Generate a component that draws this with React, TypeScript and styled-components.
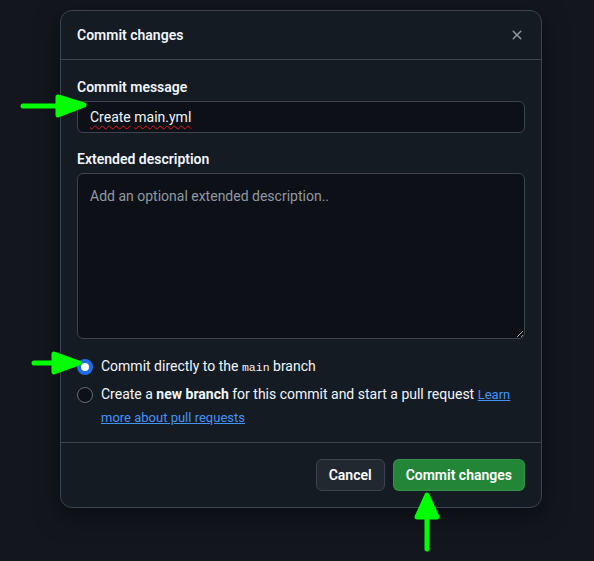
import React from "react";
import styled, { createGlobalStyle } from "styled-components";

const Global = createGlobalStyle`
  html, body { margin: 0; padding: 0; background: #13171d; }
  body {
    font-family: Roboto, "Noto Sans", "Liberation Sans", sans-serif;
    color: #f0f6fc;
    font-size: 14px;
  }
  * { box-sizing: border-box; }
`;

const Page = styled.div`
  position: relative;
  width: 594px;
  height: 561px;
  padding: 10px 0 0 60px;
`;

const Dialog = styled.div`
  width: 482px;
  background: #151b23;
  border: 1px solid #3d444d;
  border-radius: 12px;
  box-shadow: 0 8px 24px rgba(1, 4, 9, 0.5);
  display: flex;
  flex-direction: column;
`;

const Header = styled.div`
  display: flex;
  align-items: center;
  padding: 8px 8px 8px 16px;
  border-bottom: 1px solid #3d444d;
`;

const Title = styled.h1`
  flex: 1;
  margin: 0;
  font-size: 14px;
  font-weight: 600;
  line-height: 20px;
`;

const CloseButton = styled.button`
  width: 32px;
  height: 32px;
  display: flex;
  align-items: center;
  justify-content: center;
  background: transparent;
  border: none;
  border-radius: 6px;
  color: #9198a1;
  padding: 0;
  cursor: pointer;
`;

const Body = styled.div`
  padding: 17px 16px 13px;
  display: flex;
  flex-direction: column;
`;

const Field = styled.div`
  display: flex;
  flex-direction: column;
  gap: 4px;
  margin-bottom: 16px;
`;

const Label = styled.label`
  font-size: 14px;
  font-weight: 600;
  line-height: 20px;
`;

const FakeInput = styled.div`
  height: 32px;
  padding: 5px 12px;
  background: #0d1117;
  border: 1px solid #3d444d;
  border-radius: 6px;
  font-size: 14px;
  line-height: 20px;
  white-space: pre;
`;

const Misspelled = styled.span`
  text-decoration: underline wavy #e5161b;
  text-decoration-thickness: 1px;
  text-underline-offset: 3px;
`;

const TextArea = styled.textarea`
  height: 166px;
  padding: 12px 12px;
  background: #0d1117;
  border: 1px solid #3d444d;
  border-radius: 6px;
  color: #f0f6fc;
  font-family: inherit;
  font-size: 14px;
  line-height: 20px;
  resize: vertical;
  outline: none;
  &::placeholder { color: #9198a1; }
`;

const RadioGroup = styled.div`
  display: flex;
  flex-direction: column;
  gap: 5px;
`;

const RadioRow = styled.label`
  display: flex;
  align-items: flex-start;
  gap: 8px;
  line-height: 23px;
  font-size: 14px;
`;

const Radio = styled.input.attrs({ type: "radio" })`
  appearance: none;
  margin: 3.5px 0 0;
  flex: none;
  width: 16px;
  height: 16px;
  border-radius: 50%;
  background: #0d1117;
  border: 1px solid #656c76;
  &:checked {
    background: #ffffff;
    border: 4.5px solid #1f6feb;
  }
`;

const RadioText = styled.span`
  flex: 1;
`;

const Code = styled.code`
  font-family: "Liberation Mono", "DejaVu Sans Mono", monospace;
  font-size: 11.5px;
  line-height: 1;
`;

const Link = styled.a`
  color: #4493f8;
  text-decoration: underline;
  font-size: 13px;
  line-height: 1;
`;

const Footer = styled.div`
  display: flex;
  justify-content: flex-end;
  gap: 8px;
  padding: 16px;
  border-top: 1px solid #3d444d;
`;

const Button = styled.button<{ $primary?: boolean }>`
  height: 32px;
  padding: 0 12px;
  border-radius: 6px;
  font-family: inherit;
  font-size: 14px;
  font-weight: 600;
  color: #ffffff;
  background: ${(p) => (p.$primary ? "#238636" : "#212830")};
  border: 1px solid ${(p) => (p.$primary ? "rgba(240,246,252,0.1)" : "#3d444d")};
  cursor: pointer;
`;

const Annotations = styled.svg`
  position: absolute;
  left: 0;
  top: 0;
  pointer-events: none;
`;

export default function App() {
  return (
    <>
      <Global />
      <Page>
        <Dialog>
          <Header>
            <Title>Commit changes</Title>
            <CloseButton aria-label="Close">
              <svg width="16" height="16" viewBox="0 0 16 16" fill="currentColor">
                <path d="M3.72 3.72a.75.75 0 0 1 1.06 0L8 6.94l3.22-3.22a.749.749 0 0 1 1.275.326.749.749 0 0 1-.215.734L9.06 8l3.22 3.22a.749.749 0 0 1-.326 1.275.749.749 0 0 1-.734-.215L8 9.06l-3.22 3.22a.751.751 0 0 1-1.042-.018.751.751 0 0 1-.018-1.042L6.94 8 3.72 4.78a.75.75 0 0 1 0-1.06Z" />
              </svg>
            </CloseButton>
          </Header>
          <Body>
            <Field>
              <Label>Commit message</Label>
              <FakeInput>
                <Misspelled>Create</Misspelled>{" "}<Misspelled>main.yml</Misspelled>
              </FakeInput>
            </Field>
            <Field>
              <Label>Extended description</Label>
              <TextArea placeholder="Add an optional extended description.." />
            </Field>
            <RadioGroup>
              <RadioRow>
                <Radio name="branch" defaultChecked />
                <RadioText>
                  Commit directly to the <Code>main</Code> branch
                </RadioText>
              </RadioRow>
              <RadioRow>
                <Radio name="branch" />
                <RadioText>
                  Create a <strong>new branch</strong> for this commit and start a pull request{" "}
                  <Link href="#">Learn more about pull requests</Link>
                </RadioText>
              </RadioRow>
            </RadioGroup>
          </Body>
          <Footer>
            <Button>Cancel</Button>
            <Button $primary>Commit changes</Button>
          </Footer>
        </Dialog>
        <Annotations width="594" height="561" viewBox="0 0 594 561">
          <g stroke="#00ff00" fill="#00ff00" strokeWidth="5" strokeLinecap="round" strokeLinejoin="round">
            <line x1="23" y1="106" x2="70" y2="106" />
            <polygon points="58,97 84,105 58,115" />
            <line x1="34" y1="363" x2="66" y2="363" />
            <polygon points="54,354 79,363 54,372" />
            <line x1="427" y1="510" x2="427" y2="549" />
            <polygon points="417,517 427,495 437,517" />
          </g>
        </Annotations>
      </Page>
    </>
  );
}
